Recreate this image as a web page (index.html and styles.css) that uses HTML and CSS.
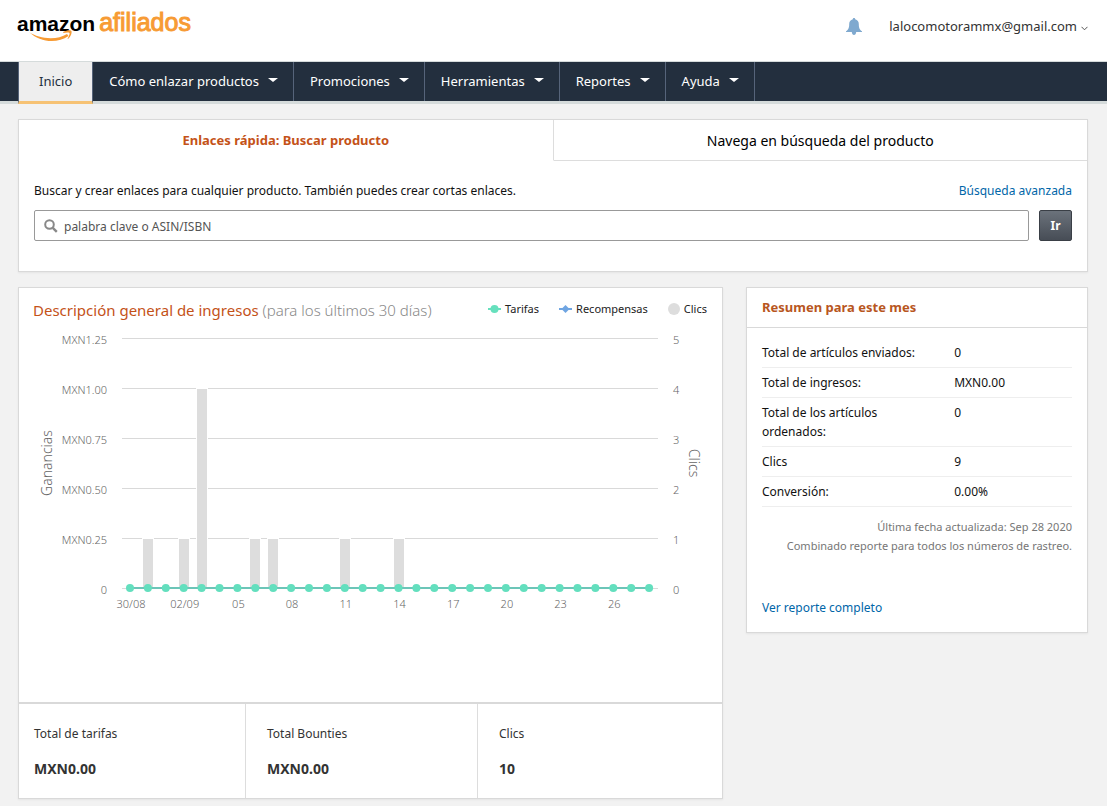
FILE: index.html
```html
<!DOCTYPE html>
<html lang="es">
<head>
<meta charset="utf-8">
<title>Amazon Afiliados</title>
<link rel="stylesheet" href="styles.css">
</head>
<body>
<header class="top">
  <a class="logo" href="#">
    <span class="logo-name">amazon</span><span class="logo-area">afiliados</span>
    <svg class="logo-smile" width="46" height="15" viewBox="0 0 46 15" aria-hidden="true">
      <path d="M0 2C10 9 28 10.500 38 4L39.500 6C28 14 11 12.500 0 2Z" fill="#f79b34"/>
      <path d="M34 2C38 0 42 0 42.500 1C43 3 42 6.500 39 9C38.500 9 38.500 8.500 39 8C40 5.500 41 3.500 40.500 3C39.500 2.300 37 2.600 34.500 3Z" fill="#f79b34"/>
    </svg>
  </a>
  <div class="account">
    <button class="bell" type="button" aria-label="Notificaciones">
      <svg width="16" height="17" viewBox="0 0 16 17" aria-hidden="true">
        <path d="M8 0C8.700 0 9.200 .500 9.200 1.200C11.500 1.800 12.800 3.500 12.800 6C12.800 10 13.600 11.500 16 13.300V14H0V13.300C2.400 11.500 3.200 10 3.200 6C3.200 3.500 4.500 1.800 6.800 1.200C6.800 .500 7.300 0 8 0ZM5.800 14H10.200C10 16 9.200 17 8 17S6 16 5.800 14Z" fill="#7fa9cf"/>
      </svg>
    </button>
    <button class="user" type="button">lalocomotorammx@gmail.com
      <svg width="7" height="5" viewBox="0 0 7 5" aria-hidden="true"><path d="M.5 .8L3.500 3.800L6.500 .8" fill="none" stroke="#555"/></svg>
    </button>
  </div>
</header>

<nav class="nav">
  <a class="nav-item active" href="#">Inicio</a>
  <a class="nav-item menu" href="#">Cómo enlazar productos</a>
  <a class="nav-item menu" href="#">Promociones</a>
  <a class="nav-item menu" href="#">Herramientas</a>
  <a class="nav-item menu" href="#">Reportes</a>
  <a class="nav-item menu" href="#">Ayuda</a>
</nav>

<main class="page">
  <section class="card">
    <div class="tabs" role="tablist">
      <button class="tab selected" type="button" role="tab" aria-selected="true">Enlaces rápida: Buscar producto</button>
      <button class="tab" type="button" role="tab" aria-selected="false">Navega en búsqueda del producto</button>
    </div>
    <form class="search">
      <div class="search-head">
        <label for="q">Buscar y crear enlaces para cualquier producto. También puedes crear cortas enlaces.</label>
        <a href="#">Búsqueda avanzada</a>
      </div>
      <div class="search-row">
        <div class="field">
          <svg width="14" height="14" viewBox="0 0 14 14" aria-hidden="true"><circle cx="5.500" cy="5.500" r="4.300" fill="none" stroke="#888" stroke-width="2"/><path d="M8.800 8.800L12.800 12.800" stroke="#888" stroke-width="2.400"/></svg>
          <input id="q" type="text" placeholder="palabra clave o ASIN/ISBN">
        </div>
        <button class="go" type="button">Ir</button>
      </div>
    </form>
  </section>

  <div class="columns">
    <section class="card earnings">
      <div class="earnings-head">
        <h2>Descripción general de ingresos <small>(para los últimos 30 días)</small></h2>
        <ul class="legend">
          <li><svg width="13" height="10" viewBox="0 0 13 10" aria-hidden="true"><path d="M0 5H13" stroke="#66e0bd" stroke-width="2"/><circle cx="6.500" cy="5" r="4" fill="#66e0bd"/></svg>Tarifas</li>
          <li><svg width="13" height="10" viewBox="0 0 13 10" aria-hidden="true"><path d="M0 5H13" stroke="#6fa5e2" stroke-width="2"/><path d="M6.500 1L10.500 5L6.500 9L2.500 5Z" fill="#6fa5e2"/></svg>Recompensas</li>
          <li><svg width="12" height="12" viewBox="0 0 12 12" aria-hidden="true"><circle cx="6" cy="6" r="6" fill="#ddd"/></svg>Clics</li>
        </ul>
      </div>
      <svg class="chart" viewBox="0 0 703 292" role="img" aria-label="Ganancias y clics por día">
        <g class="grid"></g>
        <g class="bars"></g>
        <g class="line"></g>
        <g class="labels"></g>
        <text class="axis-title" text-anchor="middle" transform="translate(33 135) rotate(-90)">Ganancias</text>
        <text class="axis-title" text-anchor="middle" transform="translate(670 135) rotate(90)">Clics</text>
      </svg>
      <dl class="stats">
        <div><dt>Total de tarifas</dt><dd>MXN0.00</dd></div>
        <div><dt>Total Bounties</dt><dd>MXN0.00</dd></div>
        <div><dt>Clics</dt><dd>10</dd></div>
      </dl>
    </section>

    <aside class="card summary">
      <h2>Resumen para este mes</h2>
      <div class="summary-body">
        <table>
          <tr><th scope="row">Total de artículos enviados:</th><td>0</td></tr>
          <tr><th scope="row">Total de ingresos:</th><td>MXN0.00</td></tr>
          <tr><th scope="row">Total de los artículos ordenados:</th><td>0</td></tr>
          <tr><th scope="row">Clics</th><td>9</td></tr>
          <tr><th scope="row">Conversión:</th><td>0.00%</td></tr>
        </table>
        <p class="note">Última fecha actualizada: Sep 28 2020<br>Combinado reporte para todos los números de rastreo.</p>
        <a class="report" href="#">Ver reporte completo</a>
      </div>
    </aside>
  </div>
</main>
<script src="chart.js"></script>
</body>
</html>
```

FILE: styles.css
```css
* { box-sizing: border-box; }
body {
  margin: 0;
  background: #f2f2f2;
  color: #111;
  font: 12px/19px "Noto Sans", "Open Sans", sans-serif;
}
a { color: #0066a8; text-decoration: none; }
button { font: inherit; color: inherit; background: none; border: 0; padding: 0; cursor: pointer; }
h2, p, dl, dd, ul { margin: 0; padding: 0; }

.top {
  display: flex;
  justify-content: space-between;
  align-items: flex-start;
  height: 62px;
  padding: 0 19px 0 17px;
  background: #fff;
  border-bottom: 1px solid #d5dbdb;
}
.logo {
  position: relative;
  display: flex;
  align-items: baseline;
  gap: 4px;
  padding-top: 8px;
  line-height: 28px;
}
.logo-name { font: bold 21px/28px "Liberation Sans", sans-serif; color: #000; }
.logo-area { font: 25px/28px "Liberation Sans", sans-serif; color: #f79b34; -webkit-text-stroke: 1px #f79b34; }
.logo-smile { position: absolute; left: 12px; top: 30px; }
.account { display: flex; align-items: center; gap: 27px; padding-top: 15px; }
.bell { display: flex; height: 22px; align-items: center; }
.user { display: flex; align-items: center; gap: 4px; color: #333; font-size: 13px; line-height: 22px; }
.user svg { margin-top: 4px; }

.nav {
  display: flex;
  height: 42px;
  padding-left: 18px;
  background: #232f3e;
  border-bottom: 3px solid #d5dbdb;
}
.nav-item {
  display: flex;
  align-items: center;
  gap: 9px;
  padding: 0 15px 0 16px;
  height: 39px;
  border-right: 1px solid #56647a;
  color: #fff;
  font-size: 13px;
}
.nav-item.menu::after {
  content: "";
  margin-top: -3px;
  border: 5px solid transparent;
  border-top: 4px solid #fff;
  border-bottom: 0;
}
.nav-item.active {
  height: 42px;
  padding: 0 20px;
  background: #eee;
  color: #232f3e;
  border-left: 1px solid #56647a;
  border-bottom: 3px solid #f6c274;
}

.page { padding: 15px 19px 7px 18px; }
.card { background: #fff; border: 1px solid #d9d9d9; box-shadow: 0 1px 2px rgba(0, 0, 0, .06); }

.tabs { display: flex; }
.tab { flex: 1; height: 41px; border-bottom: 1px solid #ddd; color: #000; font-size: 14px; }
.tab.selected { border-bottom-color: transparent; border-right: 1px solid #ddd; color: #c45218; font-size: 13px; font-weight: bold; }
.search { padding: 20px 15px 30px; }
.search-head { display: flex; justify-content: space-between; margin-bottom: 10px; }
.search-row { display: flex; gap: 10px; }
.field {
  flex: 1;
  display: flex;
  align-items: center;
  gap: 6px;
  height: 31px;
  padding: 0 9px;
  border: 1px solid #999;
  border-radius: 2px;
}
.field input { flex: 1; border: 0; outline: 0; padding: 2px 0 0; font: inherit; background: none; }
.field input::placeholder { color: #555; opacity: 1; }
.go {
  width: 33px;
  height: 31px;
  border: 1px solid #3a3f46;
  border-radius: 2px;
  background: linear-gradient(#6b727b, #474d56);
  color: #fff;
  font-weight: bold;
}

.columns { display: grid; grid-template-columns: 705fr 342fr; gap: 23px; align-items: start; margin-top: 15px; }
.earnings-head { display: flex; justify-content: space-between; align-items: flex-start; padding: 11px 15px 0 14px; height: 40px; }
.earnings h2 { color: #c45218; font-size: 15px; font-weight: normal; line-height: 22px; }
.earnings small { color: #888; font-size: 15px; font-weight: 300; }
.legend { display: flex; gap: 20px; list-style: none; font-size: 11px; color: #222; line-height: 20px; }
.legend li { display: flex; align-items: center; gap: 4px; }

.chart { display: block; width: 100%; height: auto; margin-bottom: 82px; font-size: 11px; font-weight: 300; }
.chart text { fill: #666; }
.chart .axis-title { font-size: 14px; }
.chart .grid line { stroke: #d9d9d9; }
.chart .bars rect { fill: #ddd; stroke: #fff; }
.chart .line line { stroke: #6cc5b8; stroke-width: 2; }
.chart .line circle { fill: #63dfbe; }

.stats { display: grid; grid-template-columns: 226fr 232fr 245fr; border-top: 2px solid #d9d9d9; color: #333; }
.stats div { padding: 20px 15px; border-left: 1px solid #ddd; }
.stats div + div { padding-left: 21px; }
.stats div:first-child { border-left: 0; }
.stats dd { margin-top: 16px; font-size: 14px; font-weight: bold; }

.summary h2 { padding: 10px 15px; border-bottom: 1px solid #d9d9d9; color: #b8561e; font-size: 13px; line-height: 19px; }
.summary-body { padding: 10px 15px 15px; }
.summary table { width: 100%; border-collapse: collapse; }
.summary th { width: 62%; padding: 5px 30px 5px 0; font-weight: normal; text-align: left; }
.summary th, .summary td { border-bottom: 1px solid #eee; vertical-align: top; }
.summary td { padding: 5px 0; }
.note { margin: 10px 0 43px; color: #767676; font-size: 11px; text-align: right; }
.report { display: block; }
```

FILE: chart.js
```
const ns = "http://www.w3.org/2000/svg";
const chart = document.querySelector(".chart");

function add(group, name, attrs, text) {
  const el = document.createElementNS(ns, name);
  for (const key in attrs) el.setAttribute(key, attrs[key]);
  if (text) el.textContent = text;
  chart.querySelector("." + group).append(el);
}

const base = 260.5;
const dayX = (day) => 111 + day * 17.9;
const clicks = { 1: 1, 3: 1, 4: 4, 7: 1, 8: 1, 12: 1, 15: 1 };
const amounts = ["0", "MXN0.25", "MXN0.50", "MXN0.75", "MXN1.00", "MXN1.25"];
const dates = ["30/08", "02/09", "05", "08", "11", "14", "17", "20", "23", "26"];

amounts.forEach((amount, i) => {
  const y = base - i * 50;
  add("grid", "line", { x1: 103, x2: 639, y1: y, y2: y });
  add("labels", "text", { x: 88, y: y + 5, "text-anchor": "end" }, amount);
  add("labels", "text", { x: 654, y: y + 5 }, String(i));
});
dates.forEach((date, i) => {
  add("labels", "text", { x: dayX(i * 3) + 1, y: 280, "text-anchor": "middle" }, date);
});
for (const day in clicks) {
  const height = clicks[day] * 50;
  add("bars", "rect", { x: Math.round(dayX(day)) - 5.5, y: base - height, width: 11, height });
}
add("line", "line", { x1: dayX(0), x2: dayX(29), y1: 260, y2: 260 });
for (let day = 0; day < 30; day++) {
  add("line", "circle", { cx: dayX(day), cy: 260, r: 4 });
}
```
